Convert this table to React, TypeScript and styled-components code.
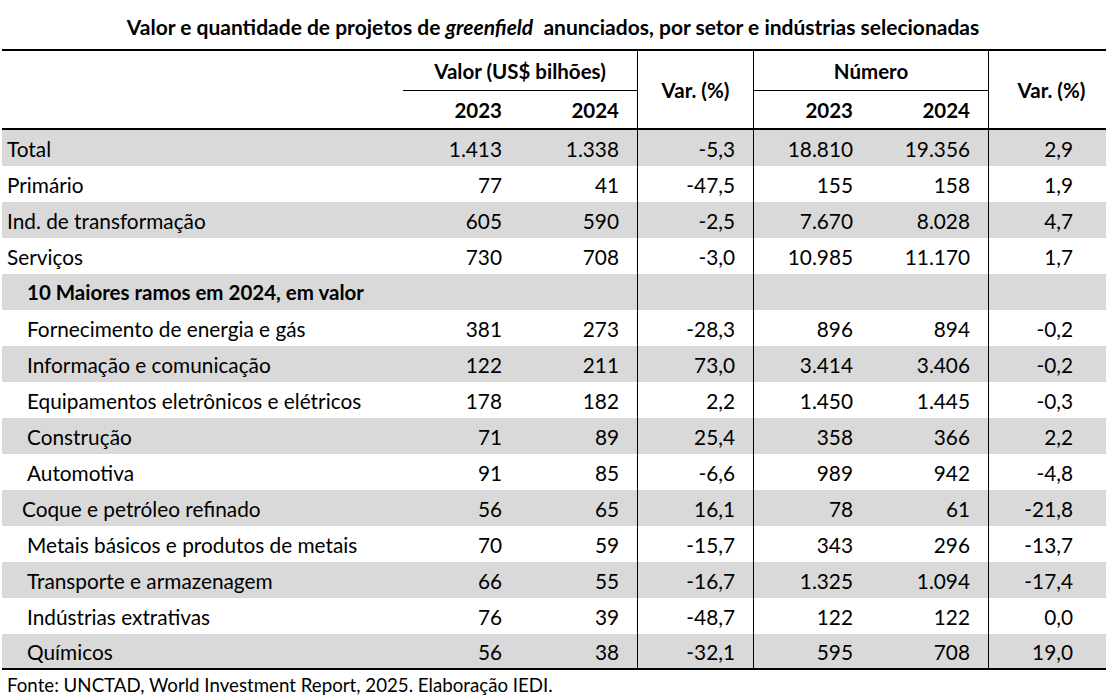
import React from 'react';
import styled, { createGlobalStyle } from 'styled-components';

type Row = {
  label: string;
  values: string[];
  indent?: number;
  section?: boolean;
};

const rows: Row[] = [
  { label: 'Total', values: ['1.413', '1.338', '-5,3', '18.810', '19.356', '2,9'] },
  { label: 'Primário', values: ['77', '41', '-47,5', '155', '158', '1,9'] },
  { label: 'Ind. de transformação', values: ['605', '590', '-2,5', '7.670', '8.028', '4,7'] },
  { label: 'Serviços', values: ['730', '708', '-3,0', '10.985', '11.170', '1,7'] },
  { label: '10 Maiores ramos em 2024, em valor', values: [], indent: 20, section: true },
  { label: 'Fornecimento de energia e gás', values: ['381', '273', '-28,3', '896', '894', '-0,2'], indent: 20 },
  { label: 'Informação e comunicação', values: ['122', '211', '73,0', '3.414', '3.406', '-0,2'], indent: 20 },
  { label: 'Equipamentos eletrônicos e elétricos', values: ['178', '182', '2,2', '1.450', '1.445', '-0,3'], indent: 20 },
  { label: 'Construção', values: ['71', '89', '25,4', '358', '366', '2,2'], indent: 20 },
  { label: 'Automotiva', values: ['91', '85', '-6,6', '989', '942', '-4,8'], indent: 20 },
  { label: 'Coque e petróleo refinado', values: ['56', '65', '16,1', '78', '61', '-21,8'], indent: 15 },
  { label: 'Metais básicos e produtos de metais', values: ['70', '59', '-15,7', '343', '296', '-13,7'], indent: 20 },
  { label: 'Transporte e armazenagem', values: ['66', '55', '-16,7', '1.325', '1.094', '-17,4'], indent: 20 },
  { label: 'Indústrias extrativas', values: ['76', '39', '-48,7', '122', '122', '0,0'], indent: 20 },
  { label: 'Químicos', values: ['56', '38', '-32,1', '595', '708', '19,0'], indent: 20 },
];

const GlobalStyle = createGlobalStyle`
  body {
    margin: 0;
    background: #ffffff;
    font-family: Lato, "Liberation Sans", sans-serif;
    color: #000000;
  }
`;

const Page = styled.div`
  width: 1106px;
  height: 700px;
  overflow: hidden;
`;

const Title = styled.h1`
  margin: 0;
  height: 49px;
  padding-top: 3px;
  box-sizing: border-box;
  display: flex;
  align-items: center;
  justify-content: center;
  font-size: 21px;
  font-weight: 700;
`;

const TitleText = styled.span`
  white-space: pre;
`;

const Table = styled.table`
  margin-left: 2px;
  width: 1104px;
  border-collapse: separate;
  border-spacing: 0;
  table-layout: fixed;
  font-size: 20.8px;
`;

const HeadCell = styled.th<{ $top?: boolean; $bottom?: boolean; $under?: boolean; $left?: boolean; $right?: boolean; $align?: string; $h: number; $pr?: number; $pl?: number }>`
  box-sizing: border-box;
  height: ${(p) => p.$h}px;
  padding: 0 ${(p) => p.$pr ?? 0}px 0 ${(p) => p.$pl ?? 0}px;
  font-size: 20.5px;
  font-weight: 700;
  text-align: ${(p) => p.$align ?? 'center'};
  vertical-align: middle;
  border-top: ${(p) => (p.$top ? '2px solid #000' : 'none')};
  border-bottom: ${(p) => (p.$bottom ? '2px solid #000' : p.$under ? '1px solid #000' : 'none')};
  border-left: ${(p) => (p.$left ? '1px solid #000' : 'none')};
  border-right: ${(p) => (p.$right ? '1px solid #000' : 'none')};
`;

const BodyRow = styled.tr<{ $shaded: boolean }>`
  background: ${(p) => (p.$shaded ? '#d9d9d9' : '#ffffff')};
`;

const LabelCell = styled.td<{ $indent: number; $bold?: boolean; $last?: boolean }>`
  box-sizing: border-box;
  height: 36px;
  padding: 0 0 0 ${(p) => 5 + p.$indent}px;
  font-weight: ${(p) => (p.$bold ? 700 : 400)};
  font-size: ${(p) => (p.$bold ? '20.5px' : 'inherit')};
  white-space: nowrap;
  border-bottom: ${(p) => (p.$last ? '2px solid #000' : 'none')};
`;

const NumCell = styled.td<{ $left?: boolean; $right?: boolean; $pad: number; $last?: boolean }>`
  box-sizing: border-box;
  height: 36px;
  padding: 0 ${(p) => p.$pad}px 0 0;
  text-align: right;
  border-left: ${(p) => (p.$left ? '1px solid #000' : 'none')};
  border-right: ${(p) => (p.$right ? '1px solid #000' : 'none')};
  border-bottom: ${(p) => (p.$last ? '2px solid #000' : 'none')};
`;

const Source = styled.p`
  margin: 0;
  padding: 4px 0 0 7px;
  font-size: 18.7px;
  white-space: nowrap;
`;

const cols = [401, 117, 117, 117, 117, 117, 118];

const cellSides = (i: number) => ({
  $left: i === 2 || i === 5,
  $right: i === 2,
  $pad: i === 5 ? 33 : 18,
});

export default function App() {
  return (
    <Page>
      <GlobalStyle />
      <Title>
        <TitleText>
          Valor e quantidade de projetos de <i>greenfield</i>{'  '}anunciados, por setor e indústrias selecionadas
        </TitleText>
      </Title>
      <Table>
        <colgroup>
          {cols.map((w, i) => (
            <col key={i} style={{ width: w }} />
          ))}
        </colgroup>
        <thead>
          <tr>
            <HeadCell rowSpan={2} $top $bottom $h={81} />
            <HeadCell colSpan={2} $top $under $h={42}>
              Valor (US$ bilhões)
            </HeadCell>
            <HeadCell rowSpan={2} $top $bottom $left $right $h={81}>
              Var. (%)
            </HeadCell>
            <HeadCell colSpan={2} $top $under $h={42}>
              Número
            </HeadCell>
            <HeadCell rowSpan={2} $top $bottom $left $h={81} $pl={8}>
              Var. (%)
            </HeadCell>
          </tr>
          <tr>
            <HeadCell $bottom $align="right" $pr={18} $h={39}>2023</HeadCell>
            <HeadCell $bottom $align="right" $pr={18} $h={39}>2024</HeadCell>
            <HeadCell $bottom $align="right" $pr={18} $h={39}>2023</HeadCell>
            <HeadCell $bottom $align="right" $pr={18} $h={39}>2024</HeadCell>
          </tr>
        </thead>
        <tbody>
          {rows.map((r, ri) => {
            const last = ri === rows.length - 1;
            return (
              <BodyRow key={r.label} $shaded={ri % 2 === 0}>
                <LabelCell $indent={r.indent ?? 0} $bold={r.section} $last={last}>
                  {r.label}
                </LabelCell>
                {[0, 1, 2, 3, 4, 5].map((ci) => (
                  <NumCell key={ci} {...cellSides(ci)} $last={last}>
                    {r.values[ci] ?? ''}
                  </NumCell>
                ))}
              </BodyRow>
            );
          })}
        </tbody>
      </Table>
      <Source>Fonte: UNCTAD, World Investment Report, 2025. Elaboração IEDI.</Source>
    </Page>
  );
}
